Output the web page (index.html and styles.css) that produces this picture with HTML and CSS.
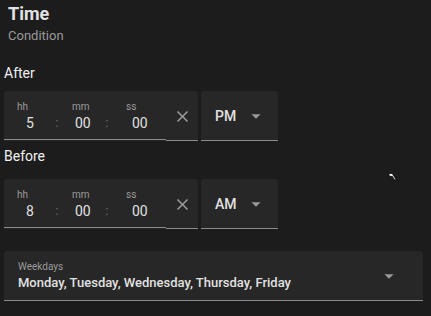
FILE: index.html
```html
<!DOCTYPE html>
<html>
<head>
<meta charset="utf-8">
<link rel="stylesheet" href="styles.css">
</head>
<body>
<div class="page">
  <div class="header">
    <div class="title">Time</div>
    <div class="subtitle">Condition</div>
  </div>

  <div class="section-label after-label">After</div>
  <div class="row">
    <div class="time-field">
      <div class="inputs">
        <div class="unit u-h"><div class="ulabel">hh</div><div class="uvalue">5</div></div>
        <div class="colon c1">:</div>
        <div class="unit u-m"><div class="ulabel">mm</div><div class="uvalue">00</div></div>
        <div class="colon c2">:</div>
        <div class="unit u-s"><div class="ulabel">ss</div><div class="uvalue">00</div></div>
      </div>
      <div class="clear">
        <svg viewBox="0 0 24 24" width="19" height="19"><path d="M19 6.41L17.59 5 12 10.59 6.41 5 5 6.41 10.59 12 5 17.59 6.41 19 12 13.41 17.59 19 19 17.59 13.41 12z"/></svg>
      </div>
    </div>
    <div class="ampm">
      <span class="ampm-text">PM</span>
      <svg class="drop" viewBox="0 0 24 24" width="22" height="22"><path d="M7 10l5 5 5-5z"/></svg>
    </div>
  </div>

  <div class="section-label before-label">Before</div>
  <div class="row">
    <div class="time-field">
      <div class="inputs">
        <div class="unit u-h"><div class="ulabel">hh</div><div class="uvalue">8</div></div>
        <div class="colon c1">:</div>
        <div class="unit u-m"><div class="ulabel">mm</div><div class="uvalue">00</div></div>
        <div class="colon c2">:</div>
        <div class="unit u-s"><div class="ulabel">ss</div><div class="uvalue">00</div></div>
      </div>
      <div class="clear">
        <svg viewBox="0 0 24 24" width="19" height="19"><path d="M19 6.41L17.59 5 12 10.59 6.41 5 5 6.41 10.59 12 5 17.59 6.41 19 12 13.41 17.59 19 19 17.59 13.41 12z"/></svg>
      </div>
    </div>
    <div class="ampm">
      <span class="ampm-text">AM</span>
      <svg class="drop" viewBox="0 0 24 24" width="22" height="22"><path d="M7 10l5 5 5-5z"/></svg>
    </div>
  </div>

  <div class="weekdays">
    <div class="wd-text">
      <div class="wd-label">Weekdays</div>
      <div class="wd-value">Monday, Tuesday, Wednesday, Thursday, Friday</div>
    </div>
    <svg class="drop" viewBox="0 0 24 24" width="22" height="22"><path d="M7 10l5 5 5-5z"/></svg>
  </div>

  <svg class="cursor" viewBox="0 0 10 9" width="10" height="9"><path d="M1 1.5 L4.2 1.5 L8 7.5 L6.6 8 L4.2 4.2 L3 4.6 L1 3.4 Z" fill="#fff" stroke="#000" stroke-width="0.7"/></svg>
</div>
</body>
</html>
```

FILE: styles.css
```css
html, body {
  margin: 0;
  padding: 0;
  background: #1c1c1c;
}
body {
  font-family: Roboto, "Noto Sans", sans-serif;
  color: #e1e1e1;
}
.page {
  position: relative;
  width: 431px;
  height: 316px;
  overflow: hidden;
  padding: 0 4px;
  box-sizing: border-box;
}
.header {
  padding: 3px 0 0 4px;
}
.title {
  font-size: 18px;
  font-weight: 700;
  line-height: 22px;
  color: #e1e1e1;
}
.subtitle {
  margin-top: 3px;
  font-size: 13px;
  line-height: 16px;
  color: #9a9a9a;
}
.section-label {
  font-size: 14px;
  line-height: 16px;
  color: #f0f0f0;
}
.after-label {
  margin-top: 21px;
  margin-bottom: 10px;
}
.before-label {
  margin-top: 7px;
  margin-bottom: 15px;
}
.row {
  display: flex;
  align-items: flex-start;
}
.time-field {
  display: flex;
  width: 194px;
  height: 50px;
  background: #272727;
  border-radius: 3px 3px 0 0;
}
.inputs {
  display: flex;
  width: 162px;
  height: 49px;
  box-sizing: border-box;
  padding-left: 13px;
  border-bottom: 1px solid #8a8a8a;
}
.unit {
  display: flex;
  flex-direction: column;
}
.ulabel {
  margin-top: 10px;
  font-size: 10px;
  line-height: 12px;
  color: #9a9a9a;
}
.uvalue {
  margin-top: 2px;
  font-size: 14px;
  line-height: 16px;
  color: #e1e1e1;
}
.u-h { width: 34px; }
.u-h .uvalue { padding-left: 9px; }
.u-m { width: 23px; margin-left: 9px; }
.u-m .uvalue { padding-left: 3px; }
.u-s { margin-left: 7px; }
.u-s .uvalue { padding-left: 6px; }
.colon {
  padding-top: 25px;
  font-size: 12px;
  line-height: 14px;
  text-align: center;
  color: #6f6f6f;
}
.c1 { width: 12px; }
.c2 { width: 24px; }
.clear {
  width: 32px;
  height: 50px;
  box-sizing: border-box;
  border-bottom: 1px solid #8a8a8a;
  display: flex;
  align-items: center;
  justify-content: center;
  padding-top: 1px;
}
.clear svg { fill: #9a9a9a; }
.ampm {
  margin-left: 3px;
  width: 77px;
  height: 50px;
  box-sizing: border-box;
  background: #272727;
  border-bottom: 1px solid #8a8a8a;
  border-radius: 3px 3px 0 0;
  display: flex;
  align-items: center;
  padding-left: 14px;
}
.ampm-text {
  font-size: 14px;
  font-weight: 500;
  line-height: 16px;
  color: #e1e1e1;
  width: 30px;
}
.drop { fill: #9a9a9a; }
.weekdays {
  margin-top: 22px;
  width: 419px;
  height: 50px;
  box-sizing: border-box;
  background: #272727;
  border-bottom: 1px solid #8a8a8a;
  border-radius: 4px 4px 0 0;
  display: flex;
  align-items: center;
  padding: 0 23px 0 14px;
}
.wd-text {
  flex: 1;
  align-self: flex-start;
}
.wd-label {
  margin-top: 10px;
  font-size: 10px;
  line-height: 12px;
  color: #9a9a9a;
}
.wd-value {
  margin-top: 2px;
  font-size: 13px;
  font-weight: 500;
  line-height: 16px;
  color: #e1e1e1;
}
.cursor {
  position: absolute;
  left: 388px;
  top: 172px;
}
```
